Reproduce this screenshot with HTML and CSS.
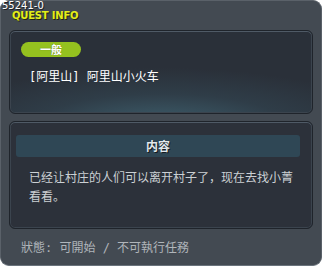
FILE: index.html
```html
<!DOCTYPE html>
<html lang="zh">
<head>
    <meta charset="UTF-8">
    <title>Quest Info</title>
    <link rel="stylesheet" href="styles.css">
</head>
<body>
    <div class="window">
        <div class="quest-id">55241-0</div>
        <div class="head">QUEST INFO</div>

        <!-- Quest name -->
        <div class="panel panel-name">
            <div class="badge">一般</div>
            <div class="quest-name">[阿里山] 阿里山小火车</div>
        </div>

        <!-- Quest description -->
        <div class="panel panel-body">
            <div class="bar">内容</div>
            <p class="desc">已经让村庄的人们可以离开村子了，现在去找小菁看看。</p>
        </div>

        <div class="status">狀態: 可開始 / 不可執行任務</div>
    </div>
</body>
</html>
```

FILE: styles.css
```css
* {
    margin: 0;
    padding: 0;
    box-sizing: border-box;
}

body {
    background: #ffffff;
    font-family: "Noto Sans CJK SC", "DejaVu Sans", sans-serif;
}

.window {
    position: relative;
    width: 322px;
    height: 266px;
    background: #434a52;
    border: 1px solid #5a6169;
    border-bottom-color: #6a737c;
    border-radius: 9px;
    padding: 0 8px;
    display: flex;
    flex-direction: column;
}

.quest-id {
    position: absolute;
    left: 1px;
    top: -1px;
    font-family: "DejaVu Sans", sans-serif;
    font-size: 10px;
    line-height: 11px;
    color: #ffffff;
    text-shadow: 1px 1px 0 #1c2026;
}

.head {
    height: 29px;
    padding: 9px 0 0 3px;
    font-family: "DejaVu Sans", sans-serif;
    font-weight: bold;
    font-size: 10px;
    line-height: 11px;
    letter-spacing: -0.2px;
    color: #e2ee1c;
    text-shadow: 1px 1px 0 #23260c;
}

.panel {
    border: 1px solid #1f242b;
    border-radius: 6px;
    box-shadow: inset 0 1px 0 #4f5a66, inset 0 0 0 1px #3b444e;
}

.panel-name {
    height: 84px;
    padding: 11px 0 0 11px;
    background: radial-gradient(ellipse 75% 70% at 50% 115%, #3e5f6d 0%, #2f3d48 55%, #2a3039 100%);
}

.badge {
    width: 60px;
    height: 15px;
    border-radius: 8px;
    background: #95c11f;
    color: #ffffff;
    font-weight: bold;
    font-size: 11px;
    line-height: 15px;
    text-align: center;
    text-shadow: 0 0 1px #55700a;
}

.quest-name {
    margin: 13px 0 0 8px;
    font-family: "DejaVu Sans Mono", "Noto Sans CJK SC", monospace;
    font-size: 12px;
    line-height: 14px;
    color: #ffffff;
}

.panel-body {
    height: 108px;
    margin-top: 7px;
    padding: 13px 12px 0 6px;
    background: #2c313a;
}

.bar {
    height: 22px;
    border-radius: 3px;
    background: #2f4755;
    color: #e2e8ec;
    font-weight: bold;
    font-size: 12px;
    line-height: 22px;
    text-align: center;
    text-shadow: 1px 1px 0 #14191e;
}

.desc {
    margin-top: 10px;
    padding: 0 0 0 13px;
    font-size: 12px;
    line-height: 19px;
    color: #cbd0d4;
}

.status {
    margin-top: 12px;
    padding-left: 12px;
    font-family: "DejaVu Sans Mono", "Noto Sans CJK SC", monospace;
    font-size: 12px;
    line-height: 14px;
    color: #b0b5ba;
}
```
